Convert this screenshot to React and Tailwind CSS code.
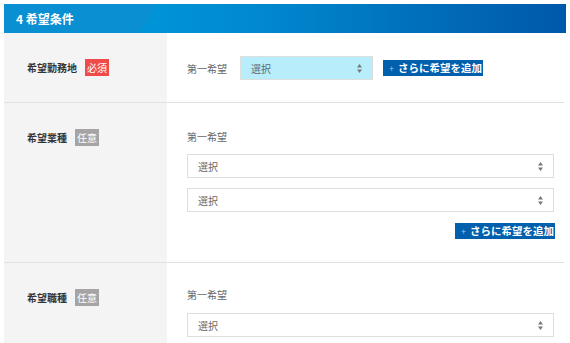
import React from "react";

const font = { fontFamily: '"Noto Sans CJK JP", "Noto Sans", sans-serif' };

const Arrows = () => (
  <svg width="5" height="9" viewBox="0 0 5 9" className="shrink-0">
    <path d="M2.5 0 L5 3.5 L0 3.5 Z" fill="#777" />
    <path d="M2.5 9 L5 5.5 L0 5.5 Z" fill="#777" />
  </svg>
);

const Select = ({ className = "" }) => (
  <div
    className={`h-[24px] flex items-center justify-between pl-[10px] pr-[10px] border border-[#dedede] text-[10px] text-[#666] ${className}`}
  >
    <span>選択</span>
    <Arrows />
  </div>
);

const AddButton = () => (
  <button className="h-[16px] w-[100px] bg-[#0060ae] text-white text-[10.5px] font-bold flex items-center pl-[6px] leading-none">
    <span className="text-[#9fc3e4] text-[9px] mr-[4px] font-normal">+</span>
    さらに希望を追加
  </button>
);

const Badge = ({ required }) => (
  <span
    className={`inline-flex items-center justify-center w-[24px] h-[17px] text-[10px] text-white ${
      required ? "bg-[#ef4b4b]" : "bg-[#a5a5a5]"
    }`}
  >
    {required ? "必須" : "任意"}
  </span>
);

const Label = ({ text, required }) => (
  <div className="w-[163px] shrink-0 bg-[#f4f4f4] pl-[23px] pt-[26px]">
    <div className="flex items-center gap-[8px]">
      <span className="text-[10px] font-bold text-[#333]">{text}</span>
      <Badge required={required} />
    </div>
  </div>
);

export default function App() {
  return (
    <div className="w-[570px] h-[343px] bg-white overflow-hidden px-[4px] pt-[4px]" style={font}>
      <div className="relative h-[29px] bg-[linear-gradient(90deg,#00a2e1_0%,#0089cf_45%,#0058aa_100%)] flex items-center">
        <div className="absolute inset-y-0 left-0 w-[153px] bg-[#0a8fd2] [clip-path:polygon(0_0,153px_0,135px_100%,0_100%)]" />
        <h2 className="relative pl-[12px] text-white text-[12px] font-bold">4 希望条件</h2>
      </div>

      <div className="w-[560px]">
        <div className="flex border-b border-[#e2e2e2] h-[70px]">
          <Label text="希望勤務地" required />
          <div className="flex-1 pl-[20px] pt-[23px] flex items-start">
            <div className="flex items-center h-[24px]">
              <span className="text-[10px] text-[#666] w-[53px]">第一希望</span>
              <Select className="w-[133px] bg-[#b8eefc]" />
              <div className="ml-[10px]">
                <AddButton />
              </div>
            </div>
          </div>
        </div>

        <div className="flex border-b border-[#e2e2e2] h-[160px]">
          <Label text="希望業種" />
          <div className="flex-1 pl-[20px] pr-[10px] pt-[26px]">
            <div className="text-[10px] text-[#666] leading-[16px]">第一希望</div>
            <Select className="mt-[9px] bg-white" />
            <Select className="mt-[10px] bg-white" />
            <div className="flex justify-end mt-[11px] -mr-[1px]">
              <AddButton />
            </div>
          </div>
        </div>

        <div className="flex h-[90px]">
          <Label text="希望職種" />
          <div className="flex-1 pl-[20px] pr-[10px] pt-[24px]">
            <div className="text-[10px] text-[#666] leading-[16px]">第一希望</div>
            <Select className="mt-[10px] bg-white" />
          </div>
        </div>
      </div>
    </div>
  );
}
